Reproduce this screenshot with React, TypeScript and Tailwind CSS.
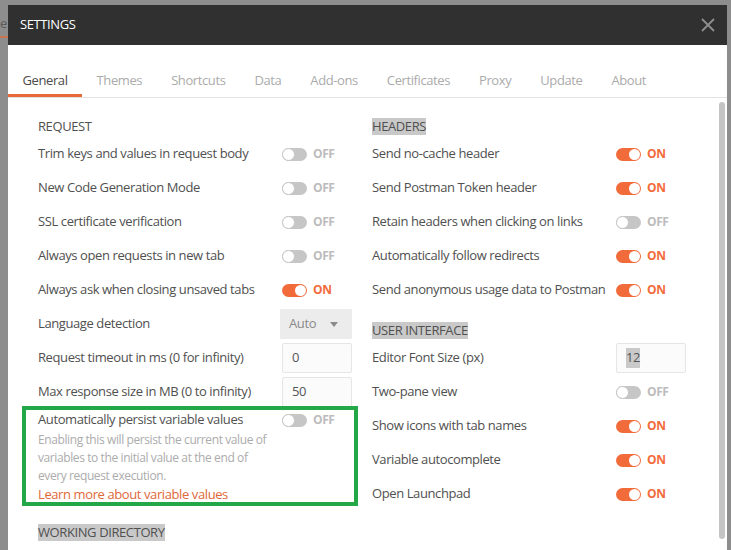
import React from 'react'

type Row =
  | { kind: 'toggle'; label: string; on: boolean }
  | { kind: 'select'; label: string; value: string }
  | { kind: 'input'; label: string; value: string; selected?: boolean }

const TABS = ['General', 'Themes', 'Shortcuts', 'Data', 'Add-ons', 'Certificates', 'Proxy', 'Update', 'About']

const REQUEST: Row[] = [
  { kind: 'toggle', label: 'Trim keys and values in request body', on: false },
  { kind: 'toggle', label: 'New Code Generation Mode', on: false },
  { kind: 'toggle', label: 'SSL certificate verification', on: false },
  { kind: 'toggle', label: 'Always open requests in new tab', on: false },
  { kind: 'toggle', label: 'Always ask when closing unsaved tabs', on: true },
  { kind: 'select', label: 'Language detection', value: 'Auto' },
  { kind: 'input', label: 'Request timeout in ms (0 for infinity)', value: '0' },
  { kind: 'input', label: 'Max response size in MB (0 to infinity)', value: '50' },
]

const HEADERS: Row[] = [
  { kind: 'toggle', label: 'Send no-cache header', on: true },
  { kind: 'toggle', label: 'Send Postman Token header', on: true },
  { kind: 'toggle', label: 'Retain headers when clicking on links', on: false },
  { kind: 'toggle', label: 'Automatically follow redirects', on: true },
  { kind: 'toggle', label: 'Send anonymous usage data to Postman', on: true },
]

const UI: Row[] = [
  { kind: 'input', label: 'Editor Font Size (px)', value: '12', selected: true },
  { kind: 'toggle', label: 'Two-pane view', on: false },
  { kind: 'toggle', label: 'Show icons with tab names', on: true },
  { kind: 'toggle', label: 'Variable autocomplete', on: true },
  { kind: 'toggle', label: 'Open Launchpad', on: true },
]

function Toggle({ on }: { on: boolean }) {
  return (
    <div className="flex items-center gap-[6px]">
      <span
        className={`flex h-[13px] w-[25px] items-center rounded-full ${
          on ? 'justify-end bg-[#f26b3a] pr-[1px]' : 'justify-start bg-[#c6c6c6]'
        }`}
      >
        {on ? (
          <span className="h-[11px] w-[11px] rounded-full bg-white" />
        ) : (
          <span className="h-[13px] w-[13px] rounded-full border border-[#c6c6c6] bg-white" />
        )}
      </span>
      <span className={`text-[12px] font-bold ${on ? 'text-[#f26b3a]' : 'text-[#bcbcbc]'}`}>
        {on ? 'ON' : 'OFF'}
      </span>
    </div>
  )
}

function Control({ row }: { row: Row }) {
  if (row.kind === 'toggle') return <Toggle on={row.on} />
  if (row.kind === 'select') {
    return (
      <div className="ml-[-2px] flex h-[30px] w-[72px] items-center justify-between bg-[#ececec] pl-[9px] pr-[14px] text-[#8a8a8a]">
        <span>{row.value}</span>
        <svg width="8" height="5" viewBox="0 0 8 5">
          <path d="M0 0h8L4 5z" fill="#8a8a8a" />
        </svg>
      </div>
    )
  }
  return (
    <div className="flex h-[30px] w-[70px] items-center rounded-[2px] border border-[#e6e6e6] bg-[#fbfbfb] px-[9px] text-[#555]">
      <span className={row.selected ? 'bg-[#c9c9c9]' : ''}>{row.value}</span>
    </div>
  )
}

function SettingRow({ row }: { row: Row }) {
  return (
    <div className="flex h-[34px] items-center">
      <div className="w-[244px] text-[#505050]">{row.label}</div>
      <Control row={row} />
    </div>
  )
}

function Heading({ children, selected }: { children: React.ReactNode; selected?: boolean }) {
  return (
    <div className="flex h-[21px] items-center">
      <span className={`leading-[17px] text-[#505050] ${selected ? 'bg-[#c9c9c9]' : ''}`}>{children}</span>
    </div>
  )
}

export default function App() {
  return (
    <div
      className="relative h-[550px] w-[731px] overflow-hidden bg-[#8d8d8d] pl-[8px] pt-[5px] text-[13px] tracking-[-0.4px]"
      style={{ fontFamily: '"Open Sans", "Liberation Sans", sans-serif' }}
    >
      {/* bits of the app behind the overlay */}
      <div className="absolute left-0 top-[14px] text-[#5a5a5a]">e</div>
      <div className="absolute left-0 top-[36px] h-[2px] w-[8px] bg-[#c8744f]" />

      <div className="h-[560px] w-[719px] bg-white">
        <div className="flex h-[40px] items-center justify-between bg-[#303030] pl-[12px] pr-[12px]">
          <span className="text-white">SETTINGS</span>
          <svg width="14" height="14" viewBox="0 0 14 14">
            <path d="M1 1l12 12M13 1L1 13" stroke="#8e8e8e" strokeWidth="1.8" />
          </svg>
        </div>

        <div className="flex border-b border-[#e2e2e2] pt-[18px]">
          {TABS.map((t, i) => (
            <div
              key={t}
              className={`flex h-[34px] items-center px-[14.5px] pt-[1px] ${
                i === 0 ? 'border-b-[3px] border-[#e8693a] pt-[4px] text-[#4a4a4a]' : 'text-[#ababab]'
              }`}
            >
              {t}
            </div>
          ))}
        </div>

        <div className="flex">
          <div className="grid flex-1 grid-cols-[314px_314px] gap-x-[20px] pl-[30px] pt-[18px]">
            <div className="relative">
              <Heading>REQUEST</Heading>
              {REQUEST.map((r) => (
                <SettingRow key={r.label} row={r} />
              ))}
              <div className="flex h-[22px] items-center">
                <div className="w-[244px] text-[#505050]">Automatically persist variable values</div>
                <Toggle on={false} />
              </div>
              <div className="w-[232px] text-[12px] leading-[18px] text-[#acacac]">
                Enabling this will persist the current value of variables to the initial value at the end of every
                request execution.
              </div>
              <div className="leading-[18px] text-[#e0683a]">Learn more about variable values</div>
              <div className="mt-[19px]">
                <Heading selected>WORKING DIRECTORY</Heading>
              </div>
              <div className="absolute left-[-16px] top-[290px] h-[100px] w-[336px] border-[4px] border-[#23a847]" />
            </div>

            <div>
              <Heading selected>HEADERS</Heading>
              {HEADERS.map((r) => (
                <SettingRow key={r.label} row={r} />
              ))}
              <div className="mt-[13px]">
                <Heading selected>USER INTERFACE</Heading>
              </div>
              {UI.map((r) => (
                <SettingRow key={r.label} row={r} />
              ))}
            </div>
          </div>
          <div className="mr-[2px] mt-[4px] h-[437px] w-[6px] rounded-full bg-[#c4c4c4]" />
        </div>
      </div>
    </div>
  )
}
